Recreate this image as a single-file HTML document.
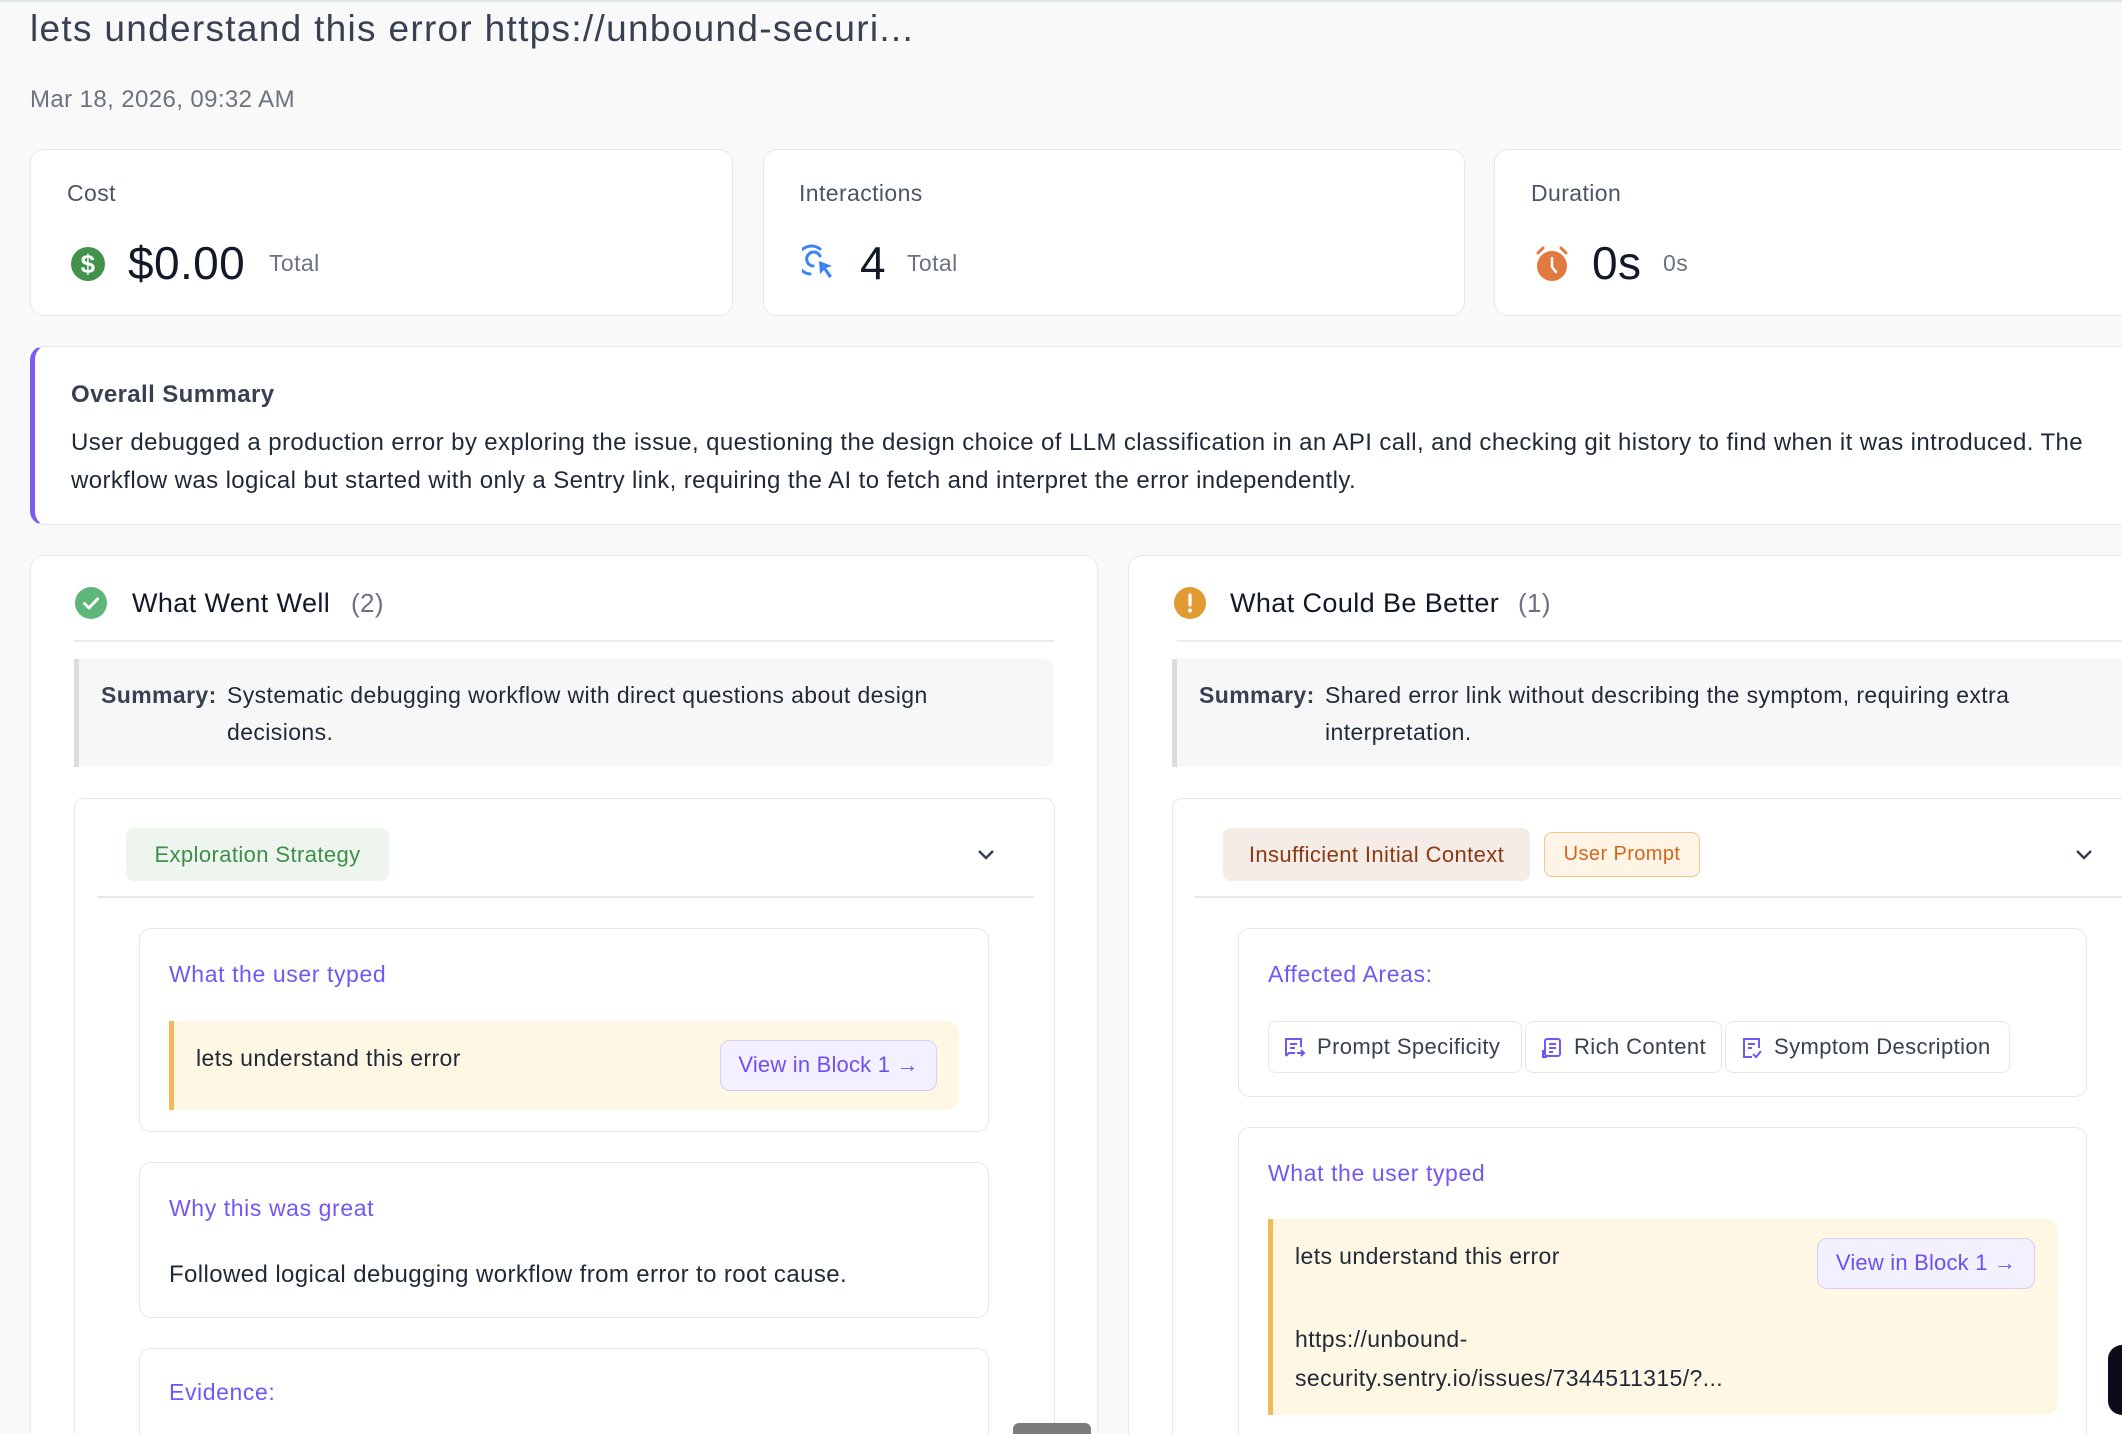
<!DOCTYPE html>
<html style="overflow:hidden;width:2122px;height:1434px"><head><meta charset="utf-8"><style>
*{box-sizing:border-box;margin:0;padding:0}
html,body{width:2122px;height:1434px;overflow:hidden}
body{background:#f9f9f9;font-family:"Liberation Sans",sans-serif;color:#1f2937;letter-spacing:0.4px}
#w{position:relative;width:2122px;height:1434px;overflow:hidden}
.a{position:absolute}
.card{position:absolute;background:#fff;border:1.5px solid #e7e7e9;border-radius:14px}
.open{border-bottom:none;border-bottom-left-radius:0;border-bottom-right-radius:0}
.lbl{font-size:23px;color:#4b5563}
.val{font-size:46px;color:#111827}
.tot{font-size:23px;color:#6b7280}
.ptitle{font-size:23px;color:#7357f6;letter-spacing:0.6px}
.yb{position:absolute;background:#fef7e4;border-left:5px solid #f0b95a;border-radius:0 12px 12px 0}
.btn{position:absolute;background:#f3f0ff;border:1.5px solid #d6cdfb;border-radius:10px;color:#6d4ff2;font-size:22px;text-align:center;letter-spacing:0.2px}
.chip{position:absolute;top:1021px;height:52px;border:1.5px solid #e7e7e9;border-radius:8px;font-size:22px;color:#374151;line-height:49px;padding-left:48px}
.chip svg{position:absolute;left:14px;top:14px}
</style></head><body><div id="w">
<div class="a" style="left:0;top:0;width:2122px;height:2px;background:#dfe7e4"></div>
<div class="a" style="left:30px;top:8px;font-size:37px;color:#374151;letter-spacing:1.3px">lets understand this error https://unbound-securi...</div>
<div class="a" style="left:30px;top:86px;font-size:24px;color:#6b7280">Mar 18, 2026, 09:32 AM</div>

<div class="card" style="left:30px;top:149px;width:703px;height:167px"></div>
<div class="card" style="left:763px;top:149px;width:702px;height:167px"></div>
<div class="card" style="left:1494px;top:149px;width:628px;height:167px;border-right:none;border-radius:14px 0 0 14px"></div>
<div class="a lbl" style="left:67px;top:180px">Cost</div>
<div class="a lbl" style="left:799px;top:180px">Interactions</div>
<div class="a lbl" style="left:1531px;top:180px">Duration</div>
<svg class="a" style="left:70px;top:246px" width="36" height="36" viewBox="0 0 36 36"><circle cx="18" cy="18" r="17" fill="#43924b"/><text x="18" y="27" font-size="26" font-weight="bold" fill="#fff" text-anchor="middle" font-family="Liberation Sans">$</text></svg>
<div class="a val" style="left:128px;top:236px">$0.00</div>
<div class="a tot" style="left:269px;top:250px">Total</div>
<svg class="a" style="left:802px;top:244px" width="36" height="40" viewBox="0 0 36 40"><path d="M18 5 A14 14 0 1 0 8 30" fill="none" stroke="#3b82f6" stroke-width="3" stroke-linecap="round"/><path d="M18 12 A7 7 0 1 0 11 22" fill="none" stroke="#3b82f6" stroke-width="3" stroke-linecap="round"/><path d="M17 17 L30 22 L24 24 L30 32 L27 34 L22 26 L18 30 Z" fill="#3b82f6"/></svg>
<div class="a val" style="left:860px;top:236px">4</div>
<div class="a tot" style="left:907px;top:250px">Total</div>
<svg class="a" style="left:1532px;top:244px" width="40" height="40" viewBox="0 0 40 40"><circle cx="20" cy="22" r="15" fill="#e07a3f"/><path d="M6 9 L11 4 M34 9 L29 4" stroke="#e07a3f" stroke-width="3" stroke-linecap="round"/><path d="M20 14 V23 L24 28" stroke="#fff" stroke-width="2.5" fill="none" stroke-linecap="round"/></svg>
<div class="a val" style="left:1592px;top:236px">0s</div>
<div class="a tot" style="left:1663px;top:250px">0s</div>

<div class="card" style="left:30px;top:346px;width:2092px;height:179px;border-left:5px solid #7c5cf0;border-right:none;border-radius:14px 0 0 14px"></div>
<div class="a" style="left:71px;top:381px;font-size:24px;font-weight:bold;color:#374151">Overall Summary</div>
<div class="a" style="left:71px;top:424px;width:2045px;font-size:24px;line-height:38px;color:#1f2937">User debugged a production error by exploring the issue, questioning the design choice of LLM classification in an API call, and checking git history to find when it was introduced. The workflow was logical but started with only a Sentry link, requiring the AI to fetch and interpret the error independently.</div>

<!-- left panel -->
<div class="card open" style="left:30px;top:555px;width:1068px;height:879px"></div>
<svg class="a" style="left:75px;top:587px" width="32" height="32" viewBox="0 0 32 32"><circle cx="16" cy="16" r="16" fill="#5fb67a"/><path d="M9.5 16.5 L14 21 L22.5 12" stroke="#fff" stroke-width="3" fill="none" stroke-linecap="round" stroke-linejoin="round"/></svg>
<div class="a" style="left:132px;top:588px;font-size:27px;color:#111827">What Went Well</div>
<div class="a" style="left:351px;top:588px;font-size:26px;color:#6b7280">(2)</div>
<div class="a" style="left:74px;top:640px;width:980px;height:2px;background:#ececee"></div>
<div class="a" style="left:74px;top:659px;width:980px;height:108px;background:#f7f7f8;border-left:5px solid #dcdce0;border-radius:0 10px 10px 0"></div>
<div class="a" style="left:101px;top:677px;font-size:23px;line-height:37px;font-weight:bold;color:#374151">Summary:</div>
<div class="a" style="left:227px;top:677px;width:770px;font-size:23px;line-height:37px;color:#1f2937">Systematic debugging workflow with direct questions about design decisions.</div>
<div class="card open" style="left:74px;top:798px;width:981px;height:636px;border-radius:10px 10px 0 0"></div>
<div class="a" style="left:126px;top:828px;width:263px;height:53px;background:#edf5ee;border-radius:8px;color:#3e8e4a;font-size:22px;line-height:53px;text-align:center">Exploration Strategy</div>
<svg class="a" style="left:976px;top:848px" width="20" height="14" viewBox="0 0 20 14"><path d="M3 3 L10 10 L17 3" stroke="#374151" stroke-width="2.5" fill="none"/></svg>
<div class="a" style="left:97px;top:896px;width:937px;height:2px;background:#e7e7ea"></div>
<div class="card" style="left:139px;top:928px;width:850px;height:204px;border-radius:12px"></div>
<div class="a ptitle" style="left:169px;top:961px">What the user typed</div>
<div class="yb" style="left:169px;top:1021px;width:790px;height:89px"></div>
<div class="a" style="left:196px;top:1045px;font-size:23px;color:#1f2937">lets understand this error</div>
<div class="btn" style="left:720px;top:1040px;width:217px;height:51px;line-height:48px">View in Block 1 →</div>
<div class="card" style="left:139px;top:1162px;width:850px;height:156px;border-radius:12px"></div>
<div class="a ptitle" style="left:169px;top:1195px">Why this was great</div>
<div class="a" style="left:169px;top:1261px;font-size:24px;color:#1f2937">Followed logical debugging workflow from error to root cause.</div>
<div class="card open" style="left:139px;top:1348px;width:850px;height:86px;border-radius:12px 12px 0 0"></div>
<div class="a ptitle" style="left:169px;top:1379px">Evidence:</div>
<div class="a" style="left:1013px;top:1423px;width:78px;height:11px;background:#7c7c7c;border-radius:6px 6px 0 0"></div>

<!-- right panel -->
<div class="card open" style="left:1128px;top:555px;width:994px;height:879px;border-right:none;border-radius:14px 0 0 0"></div>
<svg class="a" style="left:1174px;top:587px" width="32" height="32" viewBox="0 0 32 32"><circle cx="16" cy="16" r="16" fill="#e29a32"/><path d="M16 8 V18" stroke="#fff" stroke-width="3.2" stroke-linecap="round"/><circle cx="16" cy="23.5" r="2" fill="#fff"/></svg>
<div class="a" style="left:1230px;top:588px;font-size:27px;color:#111827">What Could Be Better</div>
<div class="a" style="left:1518px;top:588px;font-size:26px;color:#6b7280">(1)</div>
<div class="a" style="left:1177px;top:640px;width:945px;height:2px;background:#ececee"></div>
<div class="a" style="left:1172px;top:659px;width:950px;height:108px;background:#f7f7f8;border-left:5px solid #dcdce0"></div>
<div class="a" style="left:1199px;top:677px;font-size:23px;line-height:37px;font-weight:bold;color:#374151">Summary:</div>
<div class="a" style="left:1325px;top:677px;width:740px;font-size:23px;line-height:37px;color:#1f2937">Shared error link without describing the symptom, requiring extra interpretation.</div>
<div class="card open" style="left:1172px;top:798px;width:950px;height:636px;border-right:none;border-radius:10px 0 0 0"></div>
<div class="a" style="left:1223px;top:828px;width:307px;height:53px;background:#f5ebe7;border-radius:8px;color:#8a3a12;font-size:22px;line-height:53px;text-align:center">Insufficient Initial Context</div>
<div class="a" style="left:1544px;top:832px;width:156px;height:45px;background:#fff4e6;border:1.5px solid #f5c58a;border-radius:8px;color:#d2661c;font-size:20px;line-height:42px;text-align:center">User Prompt</div>
<svg class="a" style="left:2074px;top:848px" width="20" height="14" viewBox="0 0 20 14"><path d="M3 3 L10 10 L17 3" stroke="#374151" stroke-width="2.5" fill="none"/></svg>
<div class="a" style="left:1195px;top:896px;width:927px;height:2px;background:#e7e7ea"></div>
<div class="card" style="left:1238px;top:928px;width:849px;height:169px;border-radius:12px"></div>
<div class="a ptitle" style="left:1268px;top:961px">Affected Areas:</div>
<div class="chip" style="left:1268px;width:254px">Prompt Specificity<svg width="24" height="24" viewBox="0 0 24 24"><path d="M3 20 V3 H18 V11 M7 8 H14 M7 12 H12 M3 20 L6 17 H12 M14 17 H21 M18 14 L21 17 L18 20" stroke="#7357f6" stroke-width="2" fill="none"/></svg></div>
<div class="chip" style="left:1525px;width:197px">Rich Content<svg width="24" height="24" viewBox="0 0 24 24"><rect x="5" y="3" width="15" height="17" rx="2" stroke="#7357f6" stroke-width="2" fill="none"/><path d="M9 8 H16 M9 12 H16 M9 16 H13 M3 14 V21 H7" stroke="#7357f6" stroke-width="2" fill="none"/></svg></div>
<div class="chip" style="left:1725px;width:285px">Symptom Description<svg width="24" height="24" viewBox="0 0 24 24"><path d="M12 21 H4 V3 H19 V12 M8 8 H15 M8 12 H12 M13 18 L16 21 L21 15" stroke="#7357f6" stroke-width="2" fill="none"/></svg></div>
<div class="card open" style="left:1238px;top:1127px;width:849px;height:307px;border-radius:12px 12px 0 0"></div>
<div class="a ptitle" style="left:1268px;top:1160px">What the user typed</div>
<div class="yb" style="left:1268px;top:1219px;width:790px;height:196px"></div>
<div class="a" style="left:1295px;top:1243px;font-size:23px;color:#1f2937">lets understand this error</div>
<div class="a" style="left:1295px;top:1320px;font-size:23px;line-height:39px;color:#1f2937">https://unbound-<br>security.sentry.io/issues/7344511315/?...</div>
<div class="btn" style="left:1817px;top:1238px;width:218px;height:51px;line-height:48px">View in Block 1 →</div>
<div class="a" style="left:2108px;top:1345px;width:14px;height:70px;border-radius:35px 0 0 35px;background:#0b0b1a"></div>
</div></body></html>
